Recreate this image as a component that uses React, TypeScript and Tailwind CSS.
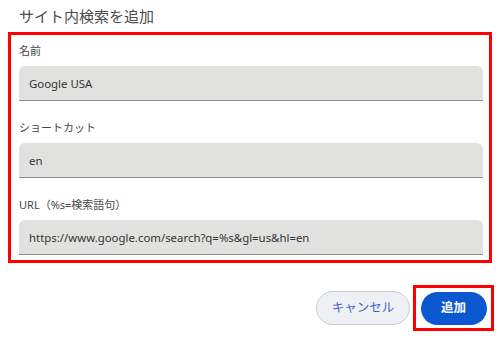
const font = { fontFamily: '"Noto Sans", "Noto Sans CJK JP", sans-serif' };

function Field({ label, value, first }: { label: string; value: string; first?: boolean }) {
  return (
    <div className={first ? '' : 'mt-[19px]'}>
      <div className="mb-[7px] h-[16px] text-[11px] leading-[16px] text-[#474747]">{label}</div>
      <div className="flex h-[35px] w-[464px] items-center rounded-t-[6px] border-b border-[#8f8f8f] bg-[#e1e2e0] px-[10px] pt-[1px] text-[11.4px] text-[#333]">
        {value}
      </div>
    </div>
  );
}

export default function App() {
  return (
    <div className="h-[338px] w-[500px] overflow-hidden bg-white" style={font}>
      <div className="h-[32px] pl-[19px] pt-[5px] text-[15px] leading-[22px] text-[#4a4a4a]">サイト内検索を追加</div>
      <div className="ml-[8px] h-[231px] w-[484px] border-[3px] border-[#ff0000] pl-[8px] pt-[8px]">
        <Field first label="名前" value="Google USA" />
        <Field label="ショートカット" value="en" />
        <Field label="URL（%s=検索語句）" value="https://www.google.com/search?q=%s&gl=us&hl=en" />
      </div>
      <div className="mt-[22px] flex items-center justify-end pr-[6px]">
        <button className="h-[34px] w-[94px] rounded-full border border-[#c9cdd4] bg-[#eef0f4] text-[12.5px] text-[#3f63c4]">
          キャンセル
        </button>
        <div className="ml-[3px] flex h-[46px] w-[81px] items-center justify-center border-[3px] border-[#ff0000]">
          <button className="h-[33px] w-[66px] rounded-full bg-[#0b57d0] text-[12.5px] font-bold text-white">追加</button>
        </div>
      </div>
    </div>
  );
}
